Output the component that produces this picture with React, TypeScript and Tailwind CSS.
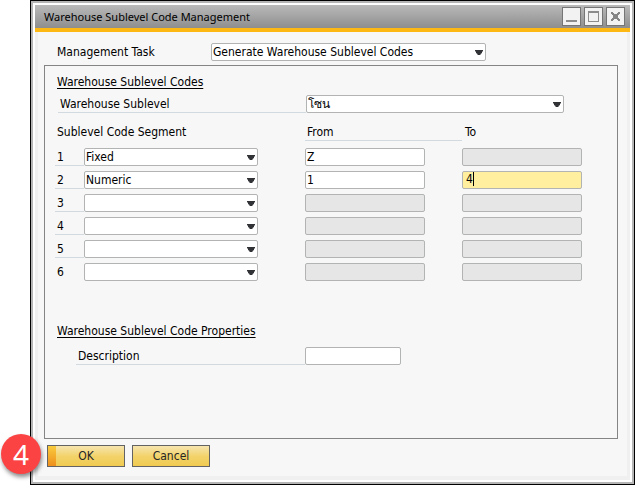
import { useState, type ReactNode } from 'react';
import clsx from 'clsx';

interface Segment {
  id: number;
  type: string;
  from: string;
  to: string;
  fromEnabled: boolean;
  toEnabled: boolean;
}

const SEGMENTS: Segment[] = [
  { id: 1, type: 'Fixed', from: 'Z', to: '', fromEnabled: true, toEnabled: false },
  { id: 2, type: 'Numeric', from: '1', to: '4', fromEnabled: true, toEnabled: true },
  { id: 3, type: '', from: '', to: '', fromEnabled: false, toEnabled: false },
  { id: 4, type: '', from: '', to: '', fromEnabled: false, toEnabled: false },
  { id: 5, type: '', from: '', to: '', fromEnabled: false, toEnabled: false },
  { id: 6, type: '', from: '', to: '', fromEnabled: false, toEnabled: false },
];

const SEGMENT_TYPES = ['', 'Fixed', 'Numeric'];

function SelectField({ id, value, options, className, label }: {
  id: string;
  value: string;
  options: string[];
  className: string;
  label?: string;
}) {
  const [current, setCurrent] = useState(value);

  return (
    <div className={clsx('relative h-[18px]', className)}>
      <select
        id={id}
        aria-label={label}
        value={current}
        onChange={(e) => setCurrent(e.target.value)}
        className="block h-full w-full appearance-none rounded-[2px] border border-[#b2b4b4] bg-white pr-4 pl-px leading-4 outline-none"
      >
        {options.map((option) => (
          <option key={option} value={option}>{option}</option>
        ))}
      </select>
      <svg viewBox="0 0 8 5" className="pointer-events-none absolute top-[7px] right-[3px] h-[5px] w-2" aria-hidden="true">
        <path d="M0 0H8V1L7 2V3L5.5 4V5H2.5V4L1 3V2L0 1Z" fill="#303236" />
      </svg>
    </div>
  );
}

function TextField({ id, value = '', disabled, focused, className, label }: {
  id: string;
  value?: string;
  disabled?: boolean;
  focused?: boolean;
  className?: string;
  label?: string;
}) {
  const [text, setText] = useState(value);

  return (
    <div className={clsx('relative h-[18px]', className)}>
      <input
        id={id}
        type="text"
        aria-label={label}
        value={text}
        disabled={disabled}
        onChange={(e) => setText(e.target.value)}
        className={clsx(
          'block h-full w-full rounded-[2px] border border-[#b2b4b4] leading-4 outline-none',
          disabled ? 'bg-[#e6e6e6]' : focused ? 'bg-[#ffef9f]' : 'bg-white',
          focused ? 'pb-0.5 pl-[3px]' : 'pl-px',
        )}
      />
      {focused && <span className="absolute top-px left-[11px] h-[14px] w-px bg-black" />}
    </div>
  );
}

function WindowButton({ label, children }: { label: string; children: ReactNode }) {
  return (
    <button type="button" aria-label={label} className="h-[19px] w-[19px] border border-[#757575] bg-[#f2f2f2]">
      <svg viewBox="0 0 17 17" className="block h-[17px] w-[17px]" shapeRendering="crispEdges" aria-hidden="true">
        {children}
      </svg>
    </button>
  );
}

function TitleBar() {
  return (
    <header className="flex h-[27px] items-center justify-between border-b-4 border-[#fdb813] bg-linear-to-b from-[#bababa] to-[#8e8e8e] pr-[5px] pl-[9px]">
      <h1 className="font-['Noto_Sans',sans-serif] text-[11px] leading-4">Warehouse Sublevel Code Management</h1>
      <div className="flex gap-[3px]">
        <WindowButton label="Minimize">
          <path d="M3 12H14V14H3Z" fill="#8c8c8c" />
        </WindowButton>
        <WindowButton label="Maximize">
          <path d="M3 3H14V14H3ZM4 5V13H13V5Z" fill="#8c8c8c" fillRule="evenodd" />
        </WindowButton>
        <WindowButton label="Close">
          <path
            d="M4 4H6V5H7V6H10V5H11V4H13V6H12V7H11V10H12V11H13V13H11V12H10V11H7V12H6V13H4V11H5V10H6V7H5V6H4Z"
            fill="#858585"
          />
        </WindowButton>
      </div>
    </header>
  );
}

function SegmentGrid() {
  return (
    <div className="mt-[10px]">
      <div className="flex h-[18px]">
        <span className="ml-[2px] w-[248px] leading-[18px]">Sublevel Code Segment</span>
        <span className="w-[157px] border-b border-[#d3dadf] pl-[2px] leading-[18px]">From</span>
        <span className="pl-[3px] leading-[18px]">To</span>
      </div>
      <div className="mt-[7px] flex flex-col gap-[5px]">
        {SEGMENTS.map((segment) => (
          <div key={segment.id} className="flex">
            <label
              htmlFor={`type-${segment.id}`}
              className={clsx('h-[18px] w-[29px] border-b pl-[2px] leading-[18px]', segment.id < 6 ? 'border-[#d3dadf]' : 'border-transparent')}
            >
              {segment.id}
            </label>
            <SelectField id={`type-${segment.id}`} value={segment.type} options={SEGMENT_TYPES} className="w-[174px]" />
            <TextField
              id={`from-${segment.id}`}
              label={`From ${segment.id}`}
              value={segment.from}
              disabled={!segment.fromEnabled}
              className="ml-[47px] w-[120px]"
            />
            <TextField
              id={`to-${segment.id}`}
              label={`To ${segment.id}`}
              value={segment.to}
              disabled={!segment.toEnabled}
              focused={segment.toEnabled}
              className="ml-[37px] w-[120px]"
            />
          </div>
        ))}
      </div>
    </div>
  );
}

export default function App() {
  return (
    <div className="relative flex min-h-screen bg-white pl-[30px] font-['DejaVu_Sans_Condensed','DejaVu_Sans',Tahoma,sans-serif] text-[12px] text-black">
      <main className="flex flex-1 flex-col border border-black">
        <div className="flex flex-1 flex-col border-2 border-[#b5b5b5] bg-white p-[2px]">
          <TitleBar />
          <form className="flex flex-1 flex-col border-x-3 border-b-4 border-[#f0f0f0] bg-[#f7f7f7] px-[6px] pt-[11px]" onSubmit={(e) => e.preventDefault()}>
            <div className="flex pl-[13px]">
              <label htmlFor="task" className="w-[154px] leading-[18px]">Management Task</label>
              <SelectField id="task" value="Generate Warehouse Sublevel Codes" options={['Generate Warehouse Sublevel Codes']} className="w-[275px]" />
            </div>

            <section className="mt-1 mr-[3px] flex-1 border border-[#858585] pt-[7px] pl-[10px]">
              <h2 className="ml-[2px] leading-[18px] underline underline-offset-2">Warehouse Sublevel Codes</h2>
              <div className="mt-1 flex pl-[3px]">
                <label htmlFor="sublevel" className="h-[18px] w-[248px] border-b border-[#d3dadf] pl-[2px] leading-[18px]">Warehouse Sublevel</label>
                <SelectField id="sublevel" value="โซน" options={['โซน']} className="w-[258px]" />
              </div>

              <SegmentGrid />

              <h2 className="mt-[41px] ml-[2px] leading-[18px] underline underline-offset-2">Warehouse Sublevel Code Properties</h2>
              <div className="mt-[7px] flex pl-[21px]">
                <label htmlFor="description" className="h-[18px] w-[229px] border-b border-[#d3dadf] pl-[2px] leading-[18px]">Description</label>
                <TextField id="description" className="w-[96px]" />
              </div>
            </section>

            <div className="mt-[6px] mb-[9px] flex gap-[7px] pl-[3px]">
              <button type="submit" className="flex h-[22px] w-[78px] border border-[#636363] bg-linear-to-b from-[#f6e5ae] via-[#f3d36a] to-[#f0cb52] leading-5 text-[#262626]">
                <span className="h-full w-2 bg-linear-to-b from-[#f8cb3c] to-[#ee8f1c]" />
                <span className="flex-1 pr-2 text-center">OK</span>
              </button>
              <button type="button" className="h-[22px] w-[78px] border border-[#636363] bg-linear-to-b from-[#f6e5ae] via-[#f3d36a] to-[#f0cb52] leading-5 text-[#262626]">
                Cancel
              </button>
            </div>
          </form>
        </div>
      </main>

      {/* Step marker over the window's lower left corner */}
      <div className="absolute bottom-[11px] left-px flex h-10 w-10 items-center justify-center rounded-full bg-[#fb4343] font-['Noto_Sans',sans-serif] text-[28px] leading-10 text-white shadow-[1px_3px_4px_rgba(0,0,0,0.45)]">
        4
      </div>
    </div>
  );
}
